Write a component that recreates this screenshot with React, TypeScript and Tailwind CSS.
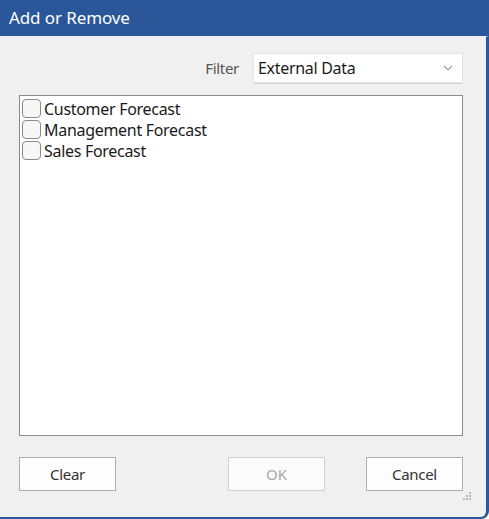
const items = ["Customer Forecast", "Management Forecast", "Sales Forecast"];

const Chevron = () => (
	<svg width="10" height="6" viewBox="0 0 10 6" fill="none">
		<path d="M1 1l4 4 4-4" stroke="#9a9a9a" strokeWidth={1.1} />
	</svg>
);

const Grip = () => (
	<svg width="10" height="10" viewBox="0 0 10 10" fill="#b8b8b8">
		<rect x="7" y="1" width="2" height="2" />
		<rect x="4" y="4" width="2" height="2" />
		<rect x="7" y="4" width="2" height="2" />
		<rect x="1" y="7" width="2" height="2" />
		<rect x="4" y="7" width="2" height="2" />
		<rect x="7" y="7" width="2" height="2" />
	</svg>
);

const App = () => {
	return (
		<div
			className="w-[489px] h-[519px] flex flex-col overflow-hidden text-[#1a1a1a]"
			style={{ fontFamily: '"Noto Sans", "Open Sans", sans-serif' }}>
			{/* Title bar */}
			<div className="h-[36px] shrink-0 bg-[#2b579a] border-r-[3px] border-[#2b579a] flex items-center pl-[9px] pb-[1px]">
				<span className="text-white text-[17px] leading-none tracking-[-0.1px]">Add or Remove</span>
			</div>
			{/* Body */}
			<div className="relative flex-1 flex flex-col bg-[#f0f0f0] border-t border-t-[#e4ebf3] border-r-[3px] border-b-[2px] border-r-[#2b579a] border-b-[#2b579a] rounded-br-[8px] pl-[19px] pr-[23px]">
				{/* Filter row */}
				<div className="mt-[16px] flex items-center justify-end gap-[14px]">
					<span className="text-[15px] text-[#555] tracking-[-0.3px]">Filter</span>
					<div className="w-[210px] h-[30px] bg-white border border-[#e3e3e3] shadow-[0_1px_0_#d6d6d6] flex items-center justify-between pl-[4px] pr-[9px]">
						<span className="text-[16px] tracking-[-0.3px]">External Data</span>
						<Chevron />
					</div>
				</div>
				{/* List */}
				<div className="mt-[12px] h-[341px] bg-white border border-[#8c8c8c] pt-[2px] pl-[2px] flex flex-col">
					{items.map((item) => (
						<label key={item} className="flex items-center h-[21px]">
							<span className="w-[19px] h-[19px] rounded-[4px] border border-[#8a8a8a] bg-[#f7f7f7]" />
							<span className="ml-[3px] text-[16px] leading-none tracking-[-0.3px]">{item}</span>
						</label>
					))}
				</div>
				{/* Buttons */}
				<div className="mt-[21px] flex items-center">
					<button className="w-[97px] h-[34px] bg-[#fdfdfd] border border-[#adadad] text-[15px] text-[#333] tracking-[-0.3px]">
						Clear
					</button>
					<button
						disabled
						className="ml-auto w-[97px] h-[34px] bg-[#fbfbfb] border border-[#cfcfcf] text-[15px] text-[#a8a8a8]">
						OK
					</button>
					<button className="ml-[41px] w-[97px] h-[34px] bg-[#fdfdfd] border border-[#adadad] text-[15px] text-[#333] tracking-[-0.3px]">
						Cancel
					</button>
				</div>
				<div className="absolute right-[14px] bottom-[16px]">
					<Grip />
				</div>
			</div>
		</div>
	);
};

export default App;
